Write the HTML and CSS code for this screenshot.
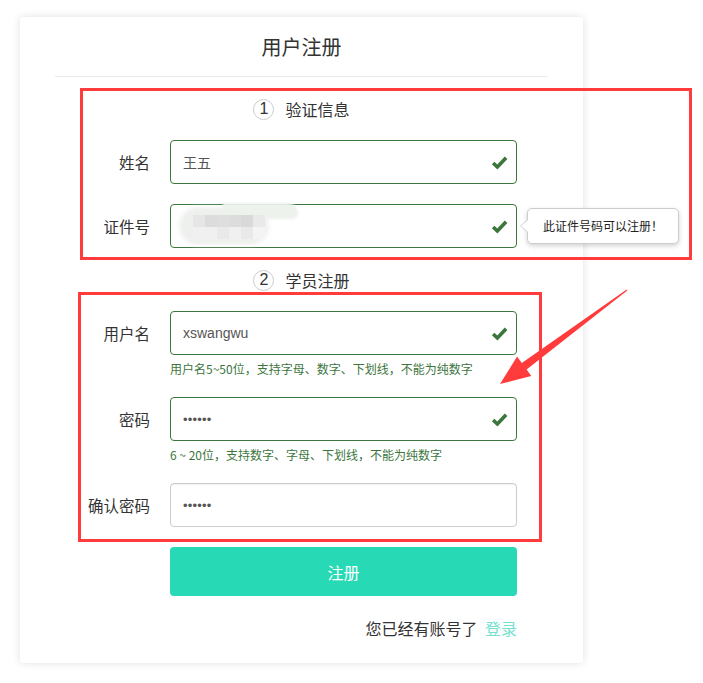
FILE: index.html
```html
<!DOCTYPE html>
<html lang="zh-CN">
<head>
<meta charset="utf-8">
<title>用户注册</title>
<link rel="stylesheet" href="styles.css">
</head>
<body>
<div class="card">
  <h2 class="title">用户注册</h2>
  <div class="divider"></div>

  <div class="step"><span class="num">1</span><span class="step-text">验证信息</span></div>

  <div class="row">
    <label class="label">姓名</label>
    <div class="field ok">
      <span class="val">王五</span>
      <svg class="check" viewBox="0 0 16 14" width="17" height="15"><path d="M2 7.5 L6 11.2 L14.2 2.5" fill="none" stroke="#3c763d" stroke-width="3.4"/></svg>
    </div>
  </div>

  <div class="row gap">
    <label class="label">证件号</label>
    <div class="field ok">
      <div class="blur">
        <span class="blob"></span>
        <span class="blob2"></span>
        <div class="mosaic">
          <i class="m1"></i><i class="m2"></i><i class="m3"></i><i class="m2"></i><i class="m4"></i><i class="m5"></i>
          <i class="m6"></i><i class="m6"></i><i class="m5"></i><i class="m6"></i><i class="m5"></i><i class="m7"></i>
        </div>
      </div>
      <svg class="check" viewBox="0 0 16 14" width="17" height="15"><path d="M2 7.5 L6 11.2 L14.2 2.5" fill="none" stroke="#3c763d" stroke-width="3.4"/></svg>
      <div class="tip">此证件号码可以注册！</div>
    </div>
  </div>

  <div class="step step2"><span class="num">2</span><span class="step-text">学员注册</span></div>

  <div class="row">
    <label class="label">用户名</label>
    <div class="field ok">
      <span class="val en">xswangwu</span>
      <svg class="check" viewBox="0 0 16 14" width="17" height="15"><path d="M2 7.5 L6 11.2 L14.2 2.5" fill="none" stroke="#3c763d" stroke-width="3.4"/></svg>
    </div>
  </div>
  <p class="hint">用户名5~50位，支持字母、数字、下划线，不能为纯数字</p>

  <div class="row gap">
    <label class="label">密码</label>
    <div class="field ok">
      <span class="val dots">••••••</span>
      <svg class="check" viewBox="0 0 16 14" width="17" height="15"><path d="M2 7.5 L6 11.2 L14.2 2.5" fill="none" stroke="#3c763d" stroke-width="3.4"/></svg>
    </div>
  </div>
  <p class="hint">6 ~ 20位，支持数字、字母、下划线，不能为纯数字</p>

  <div class="row gap">
    <label class="label">确认密码</label>
    <div class="field plain">
      <span class="val dots">••••••</span>
    </div>
  </div>

  <div class="row gap">
    <span class="label"></span>
    <button class="btn">注册</button>
  </div>

  <div class="login">您已经有账号了 <a class="link">登录</a></div>
</div>

<div class="mark mark1"></div>
<div class="mark mark2"></div>
<svg class="arrow" width="703" height="683" viewBox="0 0 703 683">
  <polygon fill="#ff3b3b" points="627.3,290.4 626.7,289.6 521.8,363.1 517.1,356.6 500,384 531.3,376 526.6,369.5"/>
</svg>
</body>
</html>
```

FILE: styles.css
```css
* { box-sizing: border-box; }
html, body { margin: 0; padding: 0; background: #fff; }
body {
  font-family: "Noto Sans CJK SC", "Liberation Sans", sans-serif;
  color: #333;
  width: 703px;
  height: 683px;
  overflow: hidden;
  position: relative;
}
.card {
  margin: 17px 0 0 20px;
  width: 563px;
  height: 646px;
  background: #fff;
  border-radius: 3px;
  box-shadow: 0 0 8px rgba(0,0,0,0.12);
  padding: 20px 0 25px;
}
.title {
  margin: 0;
  font-size: 20px;
  font-weight: normal;
  line-height: 20px;
  text-align: center;
  color: #333;
}
.divider {
  margin: 19px 35px 0;
  height: 1px;
  background: #eaeaea;
}
.step {
  margin-top: 21px;
  height: 22px;
  display: flex;
  align-items: center;
  justify-content: center;
  gap: 11px;
}
.step2 { margin-top: 21px; }
.num {
  width: 21px;
  height: 21px;
  border: 1px solid #ccc;
  border-radius: 50%;
  display: flex;
  align-items: center;
  justify-content: center;
  font-family: "Liberation Sans", sans-serif;
  font-size: 16px;
  color: #333;
}
.step-text { font-size: 16px; line-height: 22px; }
.row {
  margin-top: 20px;
  display: flex;
  align-items: center;
  gap: 20px;
}
.label {
  width: 130px;
  text-align: right;
  font-size: 15.5px;
  color: #333;
}
.field {
  position: relative;
  width: 347px;
  height: 44px;
  border-radius: 4px;
  display: flex;
  align-items: center;
  padding: 0 8px 0 12px;
}
.field.ok { border: 1px solid #3c763d; }
.field.plain {
  border: 1px solid #ccc;
  box-shadow: inset 0 1px 1px rgba(0,0,0,0.06);
}
.val { flex: 1; font-size: 14px; color: #555; }
.val.en { font-family: "Liberation Sans", sans-serif; }
.val.dots { font-family: "Liberation Sans", sans-serif; font-size: 13px; letter-spacing: 0.2px; color: #555; }
.check { flex: none; }
.hint {
  margin: 6px 0 0 150px;
  font-size: 12px;
  line-height: 16px;
  color: #3c763d;
}
.blur { flex: 1; position: relative; height: 42px; }
.blob {
  position: absolute;
  left: -4px; top: 2px;
  width: 90px; height: 38px;
  border-radius: 20px;
  background: #eef0ee;
  filter: blur(2px);
}
.blob2 {
  position: absolute;
  left: 40px; top: -2px;
  width: 75px; height: 16px;
  border-radius: 0 20px 10px 0;
  background: #edf2ed;
  filter: blur(1px);
}
.mosaic {
  position: absolute;
  left: 10px; top: 10px;
  display: grid;
  grid-template-columns: repeat(6, 12px);
  grid-auto-rows: 12px;
}
.mosaic i { display: block; }
.m1 { background: #e6e6e6; }
.m2 { background: #dcdcdc; }
.m3 { background: #dedede; }
.m4 { background: #d9d9d9; }
.m5 { background: #e9e9e9; }
.m6 { background: #f0f0f0; }
.m7 { background: #f4f4f4; }
.tip {
  position: absolute;
  left: 356px;
  top: 3px;
  width: 152px;
  height: 36px;
  background: #fff;
  border: 1px solid #ccc;
  border-radius: 5px;
  box-shadow: 0 2px 5px rgba(0,0,0,0.18);
  font-size: 12px;
  line-height: 34px;
  text-align: center;
  color: #222;
  white-space: nowrap;
}
.tip::before {
  content: "";
  position: absolute;
  left: -8px;
  top: 10px;
  border-style: solid;
  border-width: 7px 8px 7px 0;
  border-color: transparent #ccc transparent transparent;
}
.tip::after {
  content: "";
  position: absolute;
  left: -7px;
  top: 11px;
  border-style: solid;
  border-width: 6px 7px 6px 0;
  border-color: transparent #fff transparent transparent;
}
.btn {
  width: 347px;
  height: 49px;
  border: none;
  border-radius: 4px;
  background: #27d9b5;
  color: #fff;
  font-family: "Noto Sans CJK SC", sans-serif;
  font-size: 16px;
}
.login {
  margin: 22px 66px 0 0;
  text-align: right;
  font-size: 16px;
  line-height: 20px;
  color: #333;
}
.link { color: #74e2ce; margin-left: 4px; }
.mark {
  position: absolute;
  border: 3px solid #ff3b3b;
  pointer-events: none;
}
.mark1 { left: 80px; top: 88px; width: 612px; height: 172px; }
.mark2 { left: 78px; top: 292px; width: 464px; height: 250px; }
.arrow { position: absolute; left: 0; top: 0; pointer-events: none; }
```
